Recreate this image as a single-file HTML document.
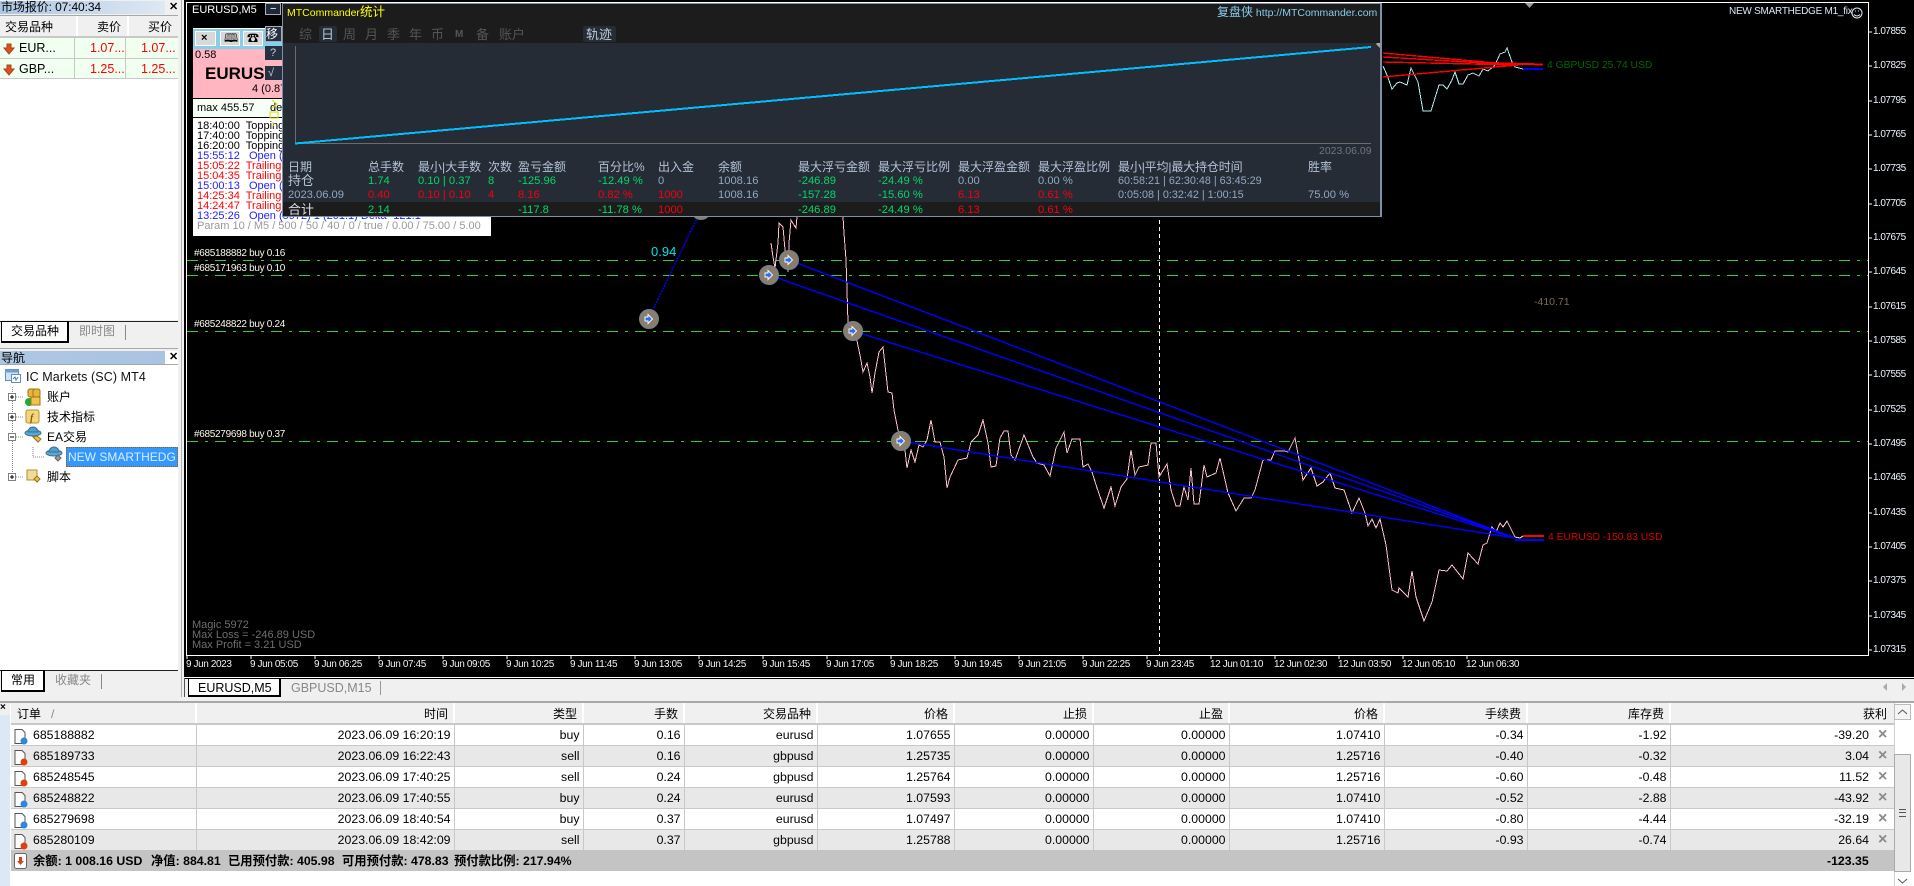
<!DOCTYPE html>
<html lang="zh"><head><meta charset="utf-8"><title>MT4</title>
<style>
*{box-sizing:border-box}
html,body{margin:0;padding:0}
body{position:relative;width:1914px;height:886px;overflow:hidden;background:#f0f0f0;font-family:"Liberation Sans","Noto Sans CJK SC",sans-serif;font-size:12px;color:#000}
.t{position:absolute;white-space:nowrap;line-height:14px}
.b{position:absolute}
.ax{left:1873px;color:#f0f6ff;font-size:10px;letter-spacing:-.5px}
.tm{top:658px;color:#f0f0f0;font-size:10px;letter-spacing:-.4px}
.ord{left:194px;color:#f8f8e8;font-size:10px;letter-spacing:-.3px}
.log{left:197px;font-size:11px;line-height:10px}
.hd{color:#b4c2d8;font-size:12px}
.v{font-size:11.2px}
.g{color:#00d868}.r{color:#f5000f}.s{color:#93a7c3}
.tab{color:#555;font-size:13px;top:28px}
#trd{position:absolute;left:11px;top:703px;width:1883px;border-collapse:collapse;table-layout:fixed;font-size:12.3px}
#trd th{height:21px;font-weight:normal;text-align:right;padding:0 5px 0 0;background:#f0f0f0;border-right:2px solid #fff;border-bottom:2px solid #c8c8c8;font-size:12px}
#trd td{height:21px;text-align:right;padding:0 3px 0 0;border-right:1px solid #c8c8c8;border-bottom:1px solid #c8c8c8;white-space:nowrap;overflow:hidden}
#trd tr.a td{background:#fff}#trd tr.c td{background:#e8e8e8}
#trd td:first-child,#trd th:first-child{text-align:left;padding-left:22px}
#trd th:first-child{padding-left:6px}
#trd td:last-child{padding-right:25px;border-right:0}
#trd th:last-child{padding-right:7px;border-right:0}
.x{position:absolute;left:1878px;color:#8a8a8a;font-size:16px;line-height:21px;font-weight:bold}
.sum{top:854px;font-weight:bold;font-size:12.3px}
</style></head><body>

<!-- left panel -->
<div class="b" style="left:0;top:0;width:178px;height:670px;background:#fff"></div>
<div class="b" style="left:0;top:0;width:178px;height:16px;background:#f0f0f0"></div>
<div class="b" style="left:0;top:1px;width:165px;height:13px;background:linear-gradient(90deg,#adc7e3,#dfe8f3)"></div>
<div class="t" style="left:1px;top:0;font-size:12px;letter-spacing:-.1px">市场报价: 07:40:34</div>
<div class="t" style="left:169px;top:0;font-weight:bold;font-size:11px">✕</div>
<div class="b" style="left:0;top:15px;width:178px;height:1px;background:#a8a8a8"></div>
<div class="b" style="left:0;top:16px;width:178px;height:21px;background:#f0f0f0"></div>
<div class="b" style="left:76px;top:16px;width:2px;height:21px;background:#fff"></div>
<div class="b" style="left:127px;top:16px;width:2px;height:21px;background:#fff"></div>
<div class="t" style="left:5px;top:20px">交易品种</div>
<div class="t" style="left:97px;top:20px">卖价</div>
<div class="t" style="left:148px;top:20px">买价</div>
<div class="b" style="left:0;top:37px;width:178px;height:42px;background:#f0fff0"></div>
<div class="b" style="left:0;top:36px;width:178px;height:2px;background:#c8c8c8"></div>
<div class="b" style="left:0;top:58px;width:178px;height:1px;background:#c8c8c8"></div>
<div class="b" style="left:0;top:78px;width:178px;height:1px;background:#c8c8c8"></div>
<div class="b" style="left:74px;top:37px;width:1px;height:42px;background:#c8c8c8"></div>
<div class="b" style="left:125px;top:37px;width:1px;height:42px;background:#c8c8c8"></div>
<svg class="b" style="left:3px;top:43px" width="12" height="12" viewBox="0 0 12 12"><path d="M4 1h4v4h3L6 11 1 5h3z" fill="#e2501a" stroke="#a8441c"/></svg>
<svg class="b" style="left:3px;top:64px" width="12" height="12" viewBox="0 0 12 12"><path d="M4 1h4v4h3L6 11 1 5h3z" fill="#e2501a" stroke="#a8441c"/></svg>
<div class="t" style="left:19px;top:41px;font-size:12.5px">EUR...</div>
<div class="t" style="left:19px;top:62px;font-size:12.5px">GBP...</div>
<div class="t" style="left:90px;top:41px;font-size:12.5px;color:#f00">1.07...</div>
<div class="t" style="left:141px;top:41px;font-size:12.5px;color:#f00">1.07...</div>
<div class="t" style="left:90px;top:62px;font-size:12.5px;color:#f00">1.25...</div>
<div class="t" style="left:141px;top:62px;font-size:12.5px;color:#f00">1.25...</div>

<div class="b" style="left:0;top:320px;width:178px;height:31px;background:#f0f0f0"></div>
<div class="b" style="left:0;top:321px;width:178px;height:1px;background:#222"></div>
<div class="b" style="left:1px;top:321px;width:68px;height:22px;background:#fff;border:1px solid #000;border-width:1px 2px 2px 1px"></div>
<div class="t" style="left:11px;top:324px;font-size:12px">交易品种</div>
<div class="t" style="left:79px;top:324px;font-size:12px;color:#888">即时图</div>
<div class="b" style="left:125px;top:325px;width:1px;height:15px;background:#888"></div>
<div class="b" style="left:0;top:348px;width:178px;height:1px;background:#a8a8a8"></div>
<div class="b" style="left:0;top:351px;width:165px;height:13px;background:linear-gradient(90deg,#adc7e3,#a9c4e2)"></div>
<div class="t" style="left:1px;top:351px;font-size:12px">导航</div>
<div class="t" style="left:169px;top:350px;font-weight:bold;font-size:11px">✕</div>
<div class="b" style="left:0;top:364px;width:178px;height:1px;background:#a8a8a8"></div>

<svg class="b" style="left:0;top:365px" width="178" height="125" viewBox="0 365 178 125">
<path d="M12.5 387V477M16 397H24M16 417H24M16 437H24M16 477H24M33 447V457H45" stroke="#888" stroke-dasharray="1 1" fill="none"/>
<g fill="#fff" stroke="#808080"><rect x="8.5" y="393.5" width="7" height="7"/><rect x="8.5" y="413.5" width="7" height="7"/><rect x="8.5" y="433.5" width="7" height="7"/><rect x="8.5" y="473.5" width="7" height="7"/></g>
<path d="M10 397h4M12 395v4M10 417h4M12 415v4M10 437h4M10 477h4M12 475v4" stroke="#000"/>
<rect x="5.5" y="369.5" width="13" height="11" fill="#cfe2f8" stroke="#5f8fc7"/><rect x="5.5" y="369.5" width="13" height="3" fill="#6a9fd8"/>
<rect x="11.5" y="374.5" width="9" height="8" fill="#fff" stroke="#5f8fc7"/><path d="M13 379l2-2 1 3 2-3" stroke="#4477bb" fill="none"/>
<rect x="28" y="389" width="8" height="8" rx="2" fill="#e9b63a" stroke="#9a7415"/><rect x="33" y="389" width="7" height="8" rx="2" fill="#e9b63a" stroke="#9a7415"/>
<circle cx="29" cy="402" r="4" fill="#22a838"/><rect x="31" y="397" width="9" height="8" fill="#f2c24a" stroke="#9a7415"/>
<rect x="26" y="410" width="13" height="13" rx="2" fill="#f4d77c" stroke="#b78f2a"/><text x="30" y="421" font-size="10" font-style="italic" font-family="Liberation Serif,serif" fill="#8a5a00" font-weight="bold">f</text>
<ellipse cx="33" cy="433" rx="8" ry="3" fill="#59a8d8" stroke="#3a6f95"/><path d="M28 432a5 5 0 0 1 10 0z" fill="#4e9ed0" stroke="#3a6f95"/><path d="M33 437l5 5 3-3-4-3z" fill="#e7c34a" stroke="#8f7420"/>
<ellipse cx="54" cy="453" rx="8" ry="3" fill="#59a8d8" stroke="#3a6f95"/><path d="M49 452a5 5 0 0 1 10 0z" fill="#4e9ed0" stroke="#3a6f95"/><path d="M55 458l3 3 3-3-3-3z" fill="#999" stroke="#666"/>
<path d="M27 470h10v10h-10z" fill="#f0dc9a" stroke="#b78f2a"/><path d="M34 479l3 3 3-3-3-3z" fill="#e7c34a" stroke="#9a7415"/>
</svg>
<div class="t" style="left:26px;top:370px;font-size:12.5px;letter-spacing:.1px;color:#111">IC Markets (SC) MT4</div>
<div class="t" style="left:47px;top:390px;font-size:12px">账户</div>
<div class="t" style="left:47px;top:410px;font-size:12px">技术指标</div>
<div class="t" style="left:47px;top:430px;font-size:12px">EA交易</div>
<div class="b" style="left:66px;top:447px;width:112px;height:20px;background:#3399ff;border:1px dotted #a05a00"></div>
<div class="t" style="left:68px;top:450px;font-size:12px;color:#dcecff;overflow:hidden;width:109px">NEW SMARTHEDG</div>
<div class="t" style="left:47px;top:470px;font-size:12px">脚本</div>

<div class="b" style="left:0;top:670px;width:178px;height:29px;background:#f0f0f0"></div>
<div class="b" style="left:0;top:670px;width:178px;height:1px;background:#222"></div>
<div class="b" style="left:1px;top:670px;width:44px;height:22px;background:#fff;border:1px solid #000;border-width:1px 2px 2px 1px"></div>
<div class="t" style="left:11px;top:673px">常用</div>
<div class="t" style="left:55px;top:673px;color:#888">收藏夹</div>
<div class="b" style="left:101px;top:674px;width:1px;height:15px;background:#888"></div>
<div class="b" style="left:181px;top:0;width:1px;height:697px;background:#b0b0b0"></div>

<!-- chart -->
<div class="b" style="left:184px;top:0;width:1730px;height:677px;background:#000"></div>
<svg class="b" style="left:0;top:0" width="1914" height="677" viewBox="0 0 1914 677">
<path d="M186.500 2.500H1868.500V655.500H186.500Z" fill="none" stroke="#fff"/>
<g stroke="#fff" shape-rendering="crispEdges">
<path d="M1868 32h4M1868 66h4M1868 101h4M1868 135h4M1868 169h4M1868 204h4M1868 238h4M1868 272h4M1868 307h4M1868 341h4M1868 375h4M1868 410h4M1868 444h4M1868 478h4M1868 513h4M1868 547h4M1868 581h4M1868 616h4M1868 650h4"/>
<path d="M187 655v4M251 655v4M315 655v4M379 655v4M443 655v4M507 655v4M571 655v4M635 655v4M699 655v4M763 655v4M827 655v4M891 655v4M955 655v4M1019 655v4M1083 655v4M1147 655v4M1211 655v4M1275 655v4M1339 655v4M1403 655v4M1467 655v4"/>
</g>
<g stroke="#32cd32" stroke-dasharray="11 7 3 7" shape-rendering="crispEdges">
<path d="M187 260.500H1868M187 275.500H1868M187 331.500H1868M187 441.500H1868"/></g>
<path d="M1159.500 3V655" stroke="#fff" stroke-dasharray="4 3" shape-rendering="crispEdges"/>
<path d="M1525 3h9l-4.500 5z" fill="#9a9a9a"/>
<g fill="none" shape-rendering="crispEdges">
<polyline stroke="#ffc0cb" points="771,243 773,257 775,268 778,243 779,223 783,227 785,250 788,272 789,243 791,220 794,225 796,228 797,217 798,200"/>
<polyline stroke="#ffc0cb" points="843,200 843,217 844,233 846,260 847,290 848,323 853,331 857,341 860,355 863,372 867,363 870,377 872,393 875,373 879,352 883,347 887,383 888,392 892,393 894,410 898,430 901,441 905,450 907,468 911,450 915,462 919,445 923,447 927,440 931,420 935,442 940,442 944,457 947,488 950,477 958,460 967,458 971,442 978,435 983,420 988,443 991,467 996,466 1000,438 1004,431 1008,431 1011,455 1015,460 1024,435 1033,457 1037,463 1044,465 1050,476 1056,448 1064,432 1067,453 1072,439 1080,439 1083,467 1088,464 1092,472 1097,488 1104,508 1111,487 1115,506 1121,487 1127,479 1131,450 1135,475 1139,467 1148,465 1151,443 1156,443 1159,477 1167,464 1171,490 1176,506 1180,506 1184,487 1188,500 1191,468 1194,504 1199,504 1204,465 1207,477 1216,473 1220,458 1228,493 1236,511 1244,498 1251,498 1255,490 1263,460 1271,460 1275,451 1285,451 1288,452 1295,438 1303,480 1311,468 1317,486 1323,482 1330,473 1335,488 1344,490 1352,513 1359,498 1365,513 1368,526 1372,519 1376,528 1380,519 1386,545 1392,590 1398,593 1399,588 1408,597 1412,571 1416,597 1424,621 1432,602 1439,570 1447,571 1452,565 1463,579 1468,553 1478,564 1483,545 1487,543 1492,527 1496,532 1500,523 1503,527 1507,521 1515,537 1520,538 1523,536"/>
<polyline stroke="#afeeee" points="1383,66 1387,75 1392,89 1397,83 1400,82 1407,85 1411,68 1418,82 1423,111 1431,111 1435,98 1439,85 1443,85 1447,89 1452,80 1455,72 1459,84 1463,84 1468,75 1473,73 1479,76 1483,69 1488,71 1495,65 1500,54 1505,52 1507,48 1512,62 1515,67 1523,69"/>
<path stroke="#0000ff" stroke-width="1.4" d="M789 260L1515 538M769 275L1515 538M853 331L1515 538M901 441L1515 538"/>
<path stroke="#0000ff" stroke-width="2" d="M1515 540H1544"/>
<path stroke="#ff0000" stroke-width="2" d="M1523 536H1544"/>
<path stroke="#ff0000" stroke-width="1.4" d="M1383 53L1518 65M1383 57L1518 65M1383 62L1518 65M1383 77L1518 65"/>
<path stroke="#ff0000" stroke-width="2" d="M1490 63L1543 64.500"/>
<path stroke="#0000ff" stroke-width="2" d="M1523 69H1543"/>
<path stroke="#0000ff" stroke-width="1.4" stroke-dasharray="2 1" d="M648.500 319L701 210"/>
</g>
<g fill="#8a7d6b" stroke="#6f8296"><circle cx="701" cy="210" r="9.5"/><circle cx="649" cy="319" r="9.5"/><circle cx="789" cy="260" r="9.5"/><circle cx="769" cy="275" r="9.5"/><circle cx="853" cy="331" r="9.5"/><circle cx="901" cy="441" r="9.5"/></g>
<g fill="#2f6cf0" stroke="#fff" stroke-width=".9">
<path d="M645 317h3v-2.500l4.500 4.500-4.500 4.500v-2.500h-3z"/><path d="M785 258h3v-2.500l4.500 4.500-4.500 4.500v-2.500h-3z"/><path d="M765 273h3v-2.500l4.500 4.500-4.500 4.500v-2.500h-3z"/><path d="M849 329h3v-2.500l4.500 4.500-4.500 4.500v-2.500h-3z"/><path d="M897 439h3v-2.500l4.500 4.500-4.500 4.500v-2.500h-3z"/></g>
</svg>
<div class="t" style="left:192px;top:3px;color:#fff;font-size:11px">EURUSD,M5</div>
<div class="t" style="left:1729px;top:5px;color:#dce8f8;font-size:10px;letter-spacing:-.25px">NEW SMARTHEDGE M1_fix</div>
<svg class="b" style="left:1851px;top:7px" width="12" height="12" viewBox="0 0 12 12"><circle cx="6" cy="6" r="5" fill="none" stroke="#dce8f8"/><path d="M3 7.500q3 3 6 0" fill="none" stroke="#dce8f8"/><path d="M4 4h1M7 4h1" stroke="#dce8f8"/></svg>
<div class="t ax" style="top:25px">1.07855</div><div class="t ax" style="top:59px">1.07825</div><div class="t ax" style="top:94px">1.07795</div><div class="t ax" style="top:128px">1.07765</div><div class="t ax" style="top:162px">1.07735</div><div class="t ax" style="top:197px">1.07705</div><div class="t ax" style="top:231px">1.07675</div><div class="t ax" style="top:265px">1.07645</div><div class="t ax" style="top:300px">1.07615</div><div class="t ax" style="top:334px">1.07585</div><div class="t ax" style="top:368px">1.07555</div><div class="t ax" style="top:403px">1.07525</div><div class="t ax" style="top:437px">1.07495</div><div class="t ax" style="top:471px">1.07465</div><div class="t ax" style="top:506px">1.07435</div><div class="t ax" style="top:540px">1.07405</div><div class="t ax" style="top:574px">1.07375</div><div class="t ax" style="top:609px">1.07345</div><div class="t ax" style="top:643px">1.07315</div>
<div class="t tm" style="left:186px">9 Jun 2023</div><div class="t tm" style="left:250px">9 Jun 05:05</div><div class="t tm" style="left:314px">9 Jun 06:25</div><div class="t tm" style="left:378px">9 Jun 07:45</div><div class="t tm" style="left:442px">9 Jun 09:05</div><div class="t tm" style="left:506px">9 Jun 10:25</div><div class="t tm" style="left:570px">9 Jun 11:45</div><div class="t tm" style="left:634px">9 Jun 13:05</div><div class="t tm" style="left:698px">9 Jun 14:25</div><div class="t tm" style="left:762px">9 Jun 15:45</div><div class="t tm" style="left:826px">9 Jun 17:05</div><div class="t tm" style="left:890px">9 Jun 18:25</div><div class="t tm" style="left:954px">9 Jun 19:45</div><div class="t tm" style="left:1018px">9 Jun 21:05</div><div class="t tm" style="left:1082px">9 Jun 22:25</div><div class="t tm" style="left:1146px">9 Jun 23:45</div><div class="t tm" style="left:1210px">12 Jun 01:10</div><div class="t tm" style="left:1274px">12 Jun 02:30</div><div class="t tm" style="left:1338px">12 Jun 03:50</div><div class="t tm" style="left:1402px">12 Jun 05:10</div><div class="t tm" style="left:1466px">12 Jun 06:30</div>
<div class="t ord" style="top:247px">#685188882 buy 0.16</div>
<div class="t ord" style="top:262px">#685171963 buy 0.10</div>
<div class="t ord" style="top:318px">#685248822 buy 0.24</div>
<div class="t ord" style="top:428px">#685279698 buy 0.37</div>
<div class="t" style="left:651px;top:245px;color:#00e5e5;font-size:13px">0.94</div>
<div class="t" style="left:1548px;top:531px;color:#e00000;font-size:10.300px">4 EURUSD -150.83 USD</div>
<div class="t" style="left:1547px;top:59px;color:#006a00;font-size:10.300px">4 GBPUSD 25.74 USD</div>
<div class="t" style="left:1534px;top:295px;color:#7a6a50;font-size:10.500px">-410.71</div>
<div class="t" style="left:192px;top:618px;color:#6e6e6e;font-size:11px">Magic 5972</div>
<div class="t" style="left:192px;top:628px;color:#6e6e6e;font-size:11px">Max Loss = -246.89 USD</div>
<div class="t" style="left:192px;top:638px;color:#6e6e6e;font-size:11px">Max Profit = 3.21 USD</div>

<!-- EA panel -->
<div class="b" style="left:193px;top:28px;width:298px;height:208px;background:#fff"></div>
<div class="b" style="left:193px;top:29px;width:89px;height:20px;background:#87ceeb"></div>
<div class="b" style="left:195px;top:31px;width:21px;height:15px;background:#d8d8d8;border:1px solid #fff"></div>
<div class="b" style="left:220px;top:31px;width:20px;height:15px;background:#d8d8d8;border:1px solid #fff"></div>
<div class="b" style="left:243px;top:31px;width:20px;height:15px;background:#d8d8d8;border:1px solid #fff"></div>
<div class="t" style="left:201px;top:31px;font-weight:bold;font-size:11px">×</div>
<div class="t" style="left:224px;top:31px;font-size:12px">🕮</div>
<div class="t" style="left:247px;top:31px;font-size:12px">☎</div>
<div class="b" style="left:193px;top:49px;width:89px;height:49px;background:#ffb6c1"></div>
<div class="t" style="left:195px;top:48px;font-size:11px">0.58</div>
<div class="t" style="left:205px;top:65px;font-size:17px;font-weight:bold;line-height:18px">EURUS</div>
<div class="t" style="left:252px;top:82px;font-size:11px">4 (0.87</div>
<div class="b" style="left:193px;top:98px;width:89px;height:20px;background:#f5fff5;border-top:1px solid #000;border-bottom:1px solid #000"></div>
<div class="t" style="left:197px;top:101px;font-size:11px">max 455.57</div>
<div class="t" style="left:270px;top:101px;font-size:11px">de</div>
<div class="t log" style="top:121px">18:40:00&nbsp; Topping</div>
<div class="t log" style="top:131px">17:40:00&nbsp; Topping</div>
<div class="t log" style="top:141px">16:20:00&nbsp; Topping</div>
<div class="t log" style="top:151px;color:#2222ff">15:55:12&nbsp;&nbsp; Open (5972)</div>
<div class="t log" style="top:161px;color:#f00">15:05:22&nbsp; Trailing</div>
<div class="t log" style="top:171px;color:#f00">15:04:35&nbsp; Trailing</div>
<div class="t log" style="top:181px;color:#2222ff">15:00:13&nbsp;&nbsp; Open (5972)</div>
<div class="t log" style="top:191px;color:#f00">14:25:34&nbsp; Trailing</div>
<div class="t log" style="top:201px;color:#f00">14:24:47&nbsp; Trailing</div>
<div class="t log" style="top:211px;color:#2222ff">13:25:26&nbsp;&nbsp; Open (5972) 1 (201.1) Delta -121.1</div>
<div class="t log" style="top:221px;color:#999">Param 10 / M5 / 500 / 50 / 40 / 0 / true / 0.00 / 75.00 / 5.00</div>
<svg class="b" style="left:266px;top:98px" width="16" height="30"><path d="M6 2l5 4-5 4M4 14h8v6H4zM7 24v4" stroke="#e8d800" fill="none"/></svg>
<div class="b" style="left:265px;top:3px;width:16px;height:12px;background:#1e2a38;border:1px solid #aab"></div>
<div class="t" style="left:270px;top:2px;color:#fff;font-size:11px">−</div>
<div class="b" style="left:265px;top:26px;width:17px;height:16px;background:#253040;border:1px solid #aab"></div>
<div class="t" style="left:266px;top:27px;color:#fff;font-size:12px">移</div>
<div class="b" style="left:265px;top:46px;width:17px;height:14px;background:#253040"></div>
<div class="t" style="left:270px;top:46px;color:#ccd;font-size:11px">?</div>
<div class="b" style="left:265px;top:66px;width:17px;height:14px;background:#253040"></div>
<div class="t" style="left:268px;top:66px;color:#ccd;font-size:11px">√</div>

<!-- stats panel -->
<div class="b" style="left:282px;top:3px;width:1100px;height:214px;background:#1c1c1c;border:1px solid #7f8fa8;border-right-width:2px"></div>
<div class="b" style="left:283px;top:43px;width:1097px;height:159px;background:#252c35"></div>
<div class="t" style="left:287px;top:4px;color:#ffff00;font-size:10.500px;line-height:16px">MTCommander<span style="font-size:12.500px">统计</span></div>
<div class="t" style="left:1217px;top:4px;color:#87cdee;font-size:10.500px;line-height:16px"><span style="font-size:12px">复盘侠</span> http://MTCommander.com</div>
<div class="b" style="left:319px;top:26px;width:18px;height:16px;background:#252c35;border-radius:2px"></div>
<div class="b" style="left:583px;top:26px;width:33px;height:16px;background:#252c35;border-radius:2px"></div>
<div class="t tab" style="left:299px">综</div><div class="t tab" style="left:321px;color:#b4c2d8">日</div><div class="t tab" style="left:343px">周</div><div class="t tab" style="left:365px">月</div><div class="t tab" style="left:387px">季</div><div class="t tab" style="left:409px">年</div><div class="t tab" style="left:431px">币</div><div class="t tab" style="left:455px;font-size:10px;font-weight:bold">M</div><div class="t tab" style="left:476px">备</div><div class="t tab" style="left:499px">账户</div><div class="t tab" style="left:586px;color:#c0cbdc">轨迹</div>
<svg class="b" style="left:283px;top:43px" width="1097" height="110" viewBox="283 43 1097 110">
<path d="M295.500 46V144M295 143.500H1371" stroke="#6b6b6b" fill="none" shape-rendering="crispEdges"/>
<path d="M295 143.500L1371 47" stroke="#00bfff" stroke-width="2" shape-rendering="crispEdges"/>
<path d="M1380 40v8l-4-4z" fill="#aaa"/>
</svg>
<div class="t" style="left:1319px;top:144px;color:#6e7682;font-size:10.500px">2023.06.09</div>
<div class="t hd" style="left:288px;top:160px">日期</div><div class="t hd" style="left:368px;top:160px">总手数</div><div class="t hd" style="left:418px;top:160px">最小|大手数</div><div class="t hd" style="left:488px;top:160px">次数</div><div class="t hd" style="left:518px;top:160px">盈亏金额</div><div class="t hd" style="left:598px;top:160px">百分比%</div><div class="t hd" style="left:658px;top:160px">出入金</div><div class="t hd" style="left:718px;top:160px">余额</div><div class="t hd" style="left:798px;top:160px">最大浮亏金额</div><div class="t hd" style="left:878px;top:160px">最大浮亏比例</div><div class="t hd" style="left:958px;top:160px">最大浮盈金额</div><div class="t hd" style="left:1038px;top:160px">最大浮盈比例</div><div class="t hd" style="left:1118px;top:160px;letter-spacing:-.15px">最小|平均|最大持仓时间</div><div class="t hd" style="left:1308px;top:160px">胜率</div>
<div class="t hd" style="left:288px;top:174px;font-size:13px">持仓</div>
<div class="t v g" style="left:368px;top:174px">1.74</div><div class="t v g" style="left:418px;top:174px">0.10 | 0.37</div><div class="t v g" style="left:488px;top:174px">8</div><div class="t v g" style="left:518px;top:174px">-125.96</div><div class="t v g" style="left:598px;top:174px">-12.49 %</div><div class="t v s" style="left:658px;top:174px">0</div><div class="t v s" style="left:718px;top:174px">1008.16</div><div class="t v g" style="left:798px;top:174px">-246.89</div><div class="t v g" style="left:878px;top:174px">-24.49 %</div><div class="t v s" style="left:958px;top:174px">0.00</div><div class="t v s" style="left:1038px;top:174px">0.00 %</div><div class="t v s" style="left:1118px;top:174px;font-size:10.800px">60:58:21 | 62:30:48 | 63:45:29</div>
<div class="t v s" style="left:288px;top:188px">2023.06.09</div>
<div class="t v r" style="left:368px;top:188px">0.40</div><div class="t v r" style="left:418px;top:188px">0.10 | 0.10</div><div class="t v r" style="left:488px;top:188px">4</div><div class="t v r" style="left:518px;top:188px">8.16</div><div class="t v r" style="left:598px;top:188px">0.82 %</div><div class="t v r" style="left:658px;top:188px">1000</div><div class="t v s" style="left:718px;top:188px">1008.16</div><div class="t v g" style="left:798px;top:188px">-157.28</div><div class="t v g" style="left:878px;top:188px">-15.60 %</div><div class="t v r" style="left:958px;top:188px">6.13</div><div class="t v r" style="left:1038px;top:188px">0.61 %</div><div class="t v s" style="left:1118px;top:188px;font-size:10.800px">0:05:08 | 0:32:42 | 1:00:15</div><div class="t v s" style="left:1308px;top:188px">75.00 %</div>
<div class="t hd" style="left:288px;top:203px;font-size:13px;color:#d8dee8;height:13px;overflow:hidden">合计</div>
<div class="t v g" style="left:368px;top:203px">2.14</div><div class="t v g" style="left:518px;top:203px">-117.8</div><div class="t v g" style="left:598px;top:203px">-11.78 %</div><div class="t v r" style="left:658px;top:203px">1000</div><div class="t v g" style="left:798px;top:203px">-246.89</div><div class="t v g" style="left:878px;top:203px">-24.49 %</div><div class="t v r" style="left:958px;top:203px">6.13</div><div class="t v r" style="left:1038px;top:203px">0.61 %</div>

<!-- chart tabs -->
<div class="b" style="left:184px;top:677px;width:1730px;height:1px;background:#fff"></div>
<div class="b" style="left:184px;top:678px;width:1730px;height:1px;background:#000"></div>
<div class="b" style="left:184px;top:678px;width:1px;height:19px;background:#555"></div>
<div class="b" style="left:188px;top:678px;width:93px;height:19px;background:#fff;border:1px solid #000;border-width:1px 2px 2px 1px"></div>
<div class="t" style="left:198px;top:681px;font-size:12.500px">EURUSD,M5</div>
<div class="t" style="left:291px;top:681px;font-size:12.500px;color:#888">GBPUSD,M15</div>
<div class="b" style="left:380px;top:681px;width:1px;height:14px;background:#999"></div>
<svg class="b" style="left:1880px;top:681px" width="28" height="12"><path d="M7 2v8l-4-4zM22 2v8l4-4z" fill="#aaa"/></svg>
<div class="b" style="left:0;top:701px;width:1914px;height:2px;background:#a8a8a8"></div>

<!-- terminal -->
<div class="b" style="left:0;top:703px;width:1914px;height:183px;background:#fff"></div>
<div class="b" style="left:0;top:703px;width:10px;height:183px;background:#dce8f5"></div>
<div class="b" style="left:0;top:703px;width:10px;height:12px;background:#f0f0f0"></div>
<div class="t" style="left:0;top:701px;font-weight:bold;font-size:10px">×</div>
<table id="trd"><colgroup><col style="width:185px"><col style="width:258px"><col style="width:129px"><col style="width:101px"><col style="width:133px"><col style="width:137px"><col style="width:139px"><col style="width:136px"><col style="width:155px"><col style="width:143px"><col style="width:143px"><col style="width:224px"></colgroup>
<tr><th>订单 &nbsp;&nbsp;<span style="color:#888">/</span></th><th>时间</th><th>类型</th><th>手数</th><th>交易品种</th><th>价格</th><th>止损</th><th>止盈</th><th>价格</th><th>手续费</th><th>库存费</th><th>获利</th></tr>
<tr class="a"><td>685188882</td><td>2023.06.09 16:20:19</td><td>buy</td><td>0.16</td><td>eurusd</td><td>1.07655</td><td>0.00000</td><td>0.00000</td><td>1.07410</td><td>-0.34</td><td>-1.92</td><td>-39.20</td></tr>
<tr class="c"><td>685189733</td><td>2023.06.09 16:22:43</td><td>sell</td><td>0.16</td><td>gbpusd</td><td>1.25735</td><td>0.00000</td><td>0.00000</td><td>1.25716</td><td>-0.40</td><td>-0.32</td><td>3.04</td></tr>
<tr class="a"><td>685248545</td><td>2023.06.09 17:40:25</td><td>sell</td><td>0.24</td><td>gbpusd</td><td>1.25764</td><td>0.00000</td><td>0.00000</td><td>1.25716</td><td>-0.60</td><td>-0.48</td><td>11.52</td></tr>
<tr class="c"><td>685248822</td><td>2023.06.09 17:40:55</td><td>buy</td><td>0.24</td><td>eurusd</td><td>1.07593</td><td>0.00000</td><td>0.00000</td><td>1.07410</td><td>-0.52</td><td>-2.88</td><td>-43.92</td></tr>
<tr class="a"><td>685279698</td><td>2023.06.09 18:40:54</td><td>buy</td><td>0.37</td><td>eurusd</td><td>1.07497</td><td>0.00000</td><td>0.00000</td><td>1.07410</td><td>-0.80</td><td>-4.44</td><td>-32.19</td></tr>
<tr class="c"><td>685280109</td><td>2023.06.09 18:42:09</td><td>sell</td><td>0.37</td><td>gbpusd</td><td>1.25788</td><td>0.00000</td><td>0.00000</td><td>1.25716</td><td>-0.93</td><td>-0.74</td><td>26.64</td></tr>
</table>
<div class="b" style="left:11px;top:850px;width:1883px;height:21px;background:#c4c4c4"></div>
<svg class="b" style="left:13px;top:724px" width="17" height="128" viewBox="0 0 17 128">
<defs><g id="doc"><path d="M2 3.500H9L12 6.500V17.500H2Z" fill="#fff" stroke="#555"/></g></defs>
<use href="#doc" y="2"/><circle cx="11" cy="17" r="3.500" fill="#2e86de"/>
<use href="#doc" y="23"/><circle cx="11" cy="38" r="3.500" fill="#e04010"/>
<use href="#doc" y="44"/><circle cx="11" cy="59" r="3.500" fill="#e04010"/>
<use href="#doc" y="65"/><circle cx="11" cy="80" r="3.500" fill="#2e86de"/>
<use href="#doc" y="86"/><circle cx="11" cy="101" r="3.500" fill="#2e86de"/>
<use href="#doc" y="107"/><circle cx="11" cy="122" r="3.500" fill="#e04010"/>
</svg>
<svg class="b" style="left:14px;top:853px" width="14" height="16"><rect x=".5" y=".5" width="12" height="15" rx="2" fill="#fff" stroke="#666"/><path d="M5 4h3v4h2l-3.500 4L3 8h2z" fill="#d94015"/></svg>
<div class="t x" style="top:724px">×</div><div class="t x" style="top:745px">×</div><div class="t x" style="top:766px">×</div><div class="t x" style="top:787px">×</div><div class="t x" style="top:808px">×</div><div class="t x" style="top:829px">×</div>
<div class="t sum" style="left:33px">余额: 1 008.16 USD</div>
<div class="t sum" style="left:151px">净值: 884.81</div>
<div class="t sum" style="left:228px">已用预付款: 405.98</div>
<div class="t sum" style="left:342px">可用预付款: 478.83</div>
<div class="t sum" style="left:454px">预付款比例: 217.94%</div>
<div class="t sum" style="left:1827px">-123.35</div>
<!-- scrollbar -->
<div class="b" style="left:1894px;top:703px;width:17px;height:183px;background:#fff;border-left:1px solid #d0d0d0"></div>
<div class="b" style="left:1894px;top:704px;width:17px;height:16px;background:#f5f5f5;border:1px solid #bbb"></div>
<svg class="b" style="left:1897px;top:708px" width="11" height="8"><path d="M1 6l4.500-4 4.500 4" stroke="#555" fill="none"/></svg>
<div class="b" style="left:1894px;top:754px;width:17px;height:118px;background:#e8e8e8;border:1px solid #aaa"></div>
<div class="b" style="left:1899px;top:809px;width:7px;height:8px;border-top:1px solid #555;border-bottom:1px solid #555"></div>
<div class="b" style="left:1899px;top:812px;width:7px;height:1px;background:#555"></div>
<svg class="b" style="left:1897px;top:877px" width="11" height="8"><path d="M1 2l4.500 4 4.500-4" stroke="#555" fill="none"/></svg>
</body></html>
